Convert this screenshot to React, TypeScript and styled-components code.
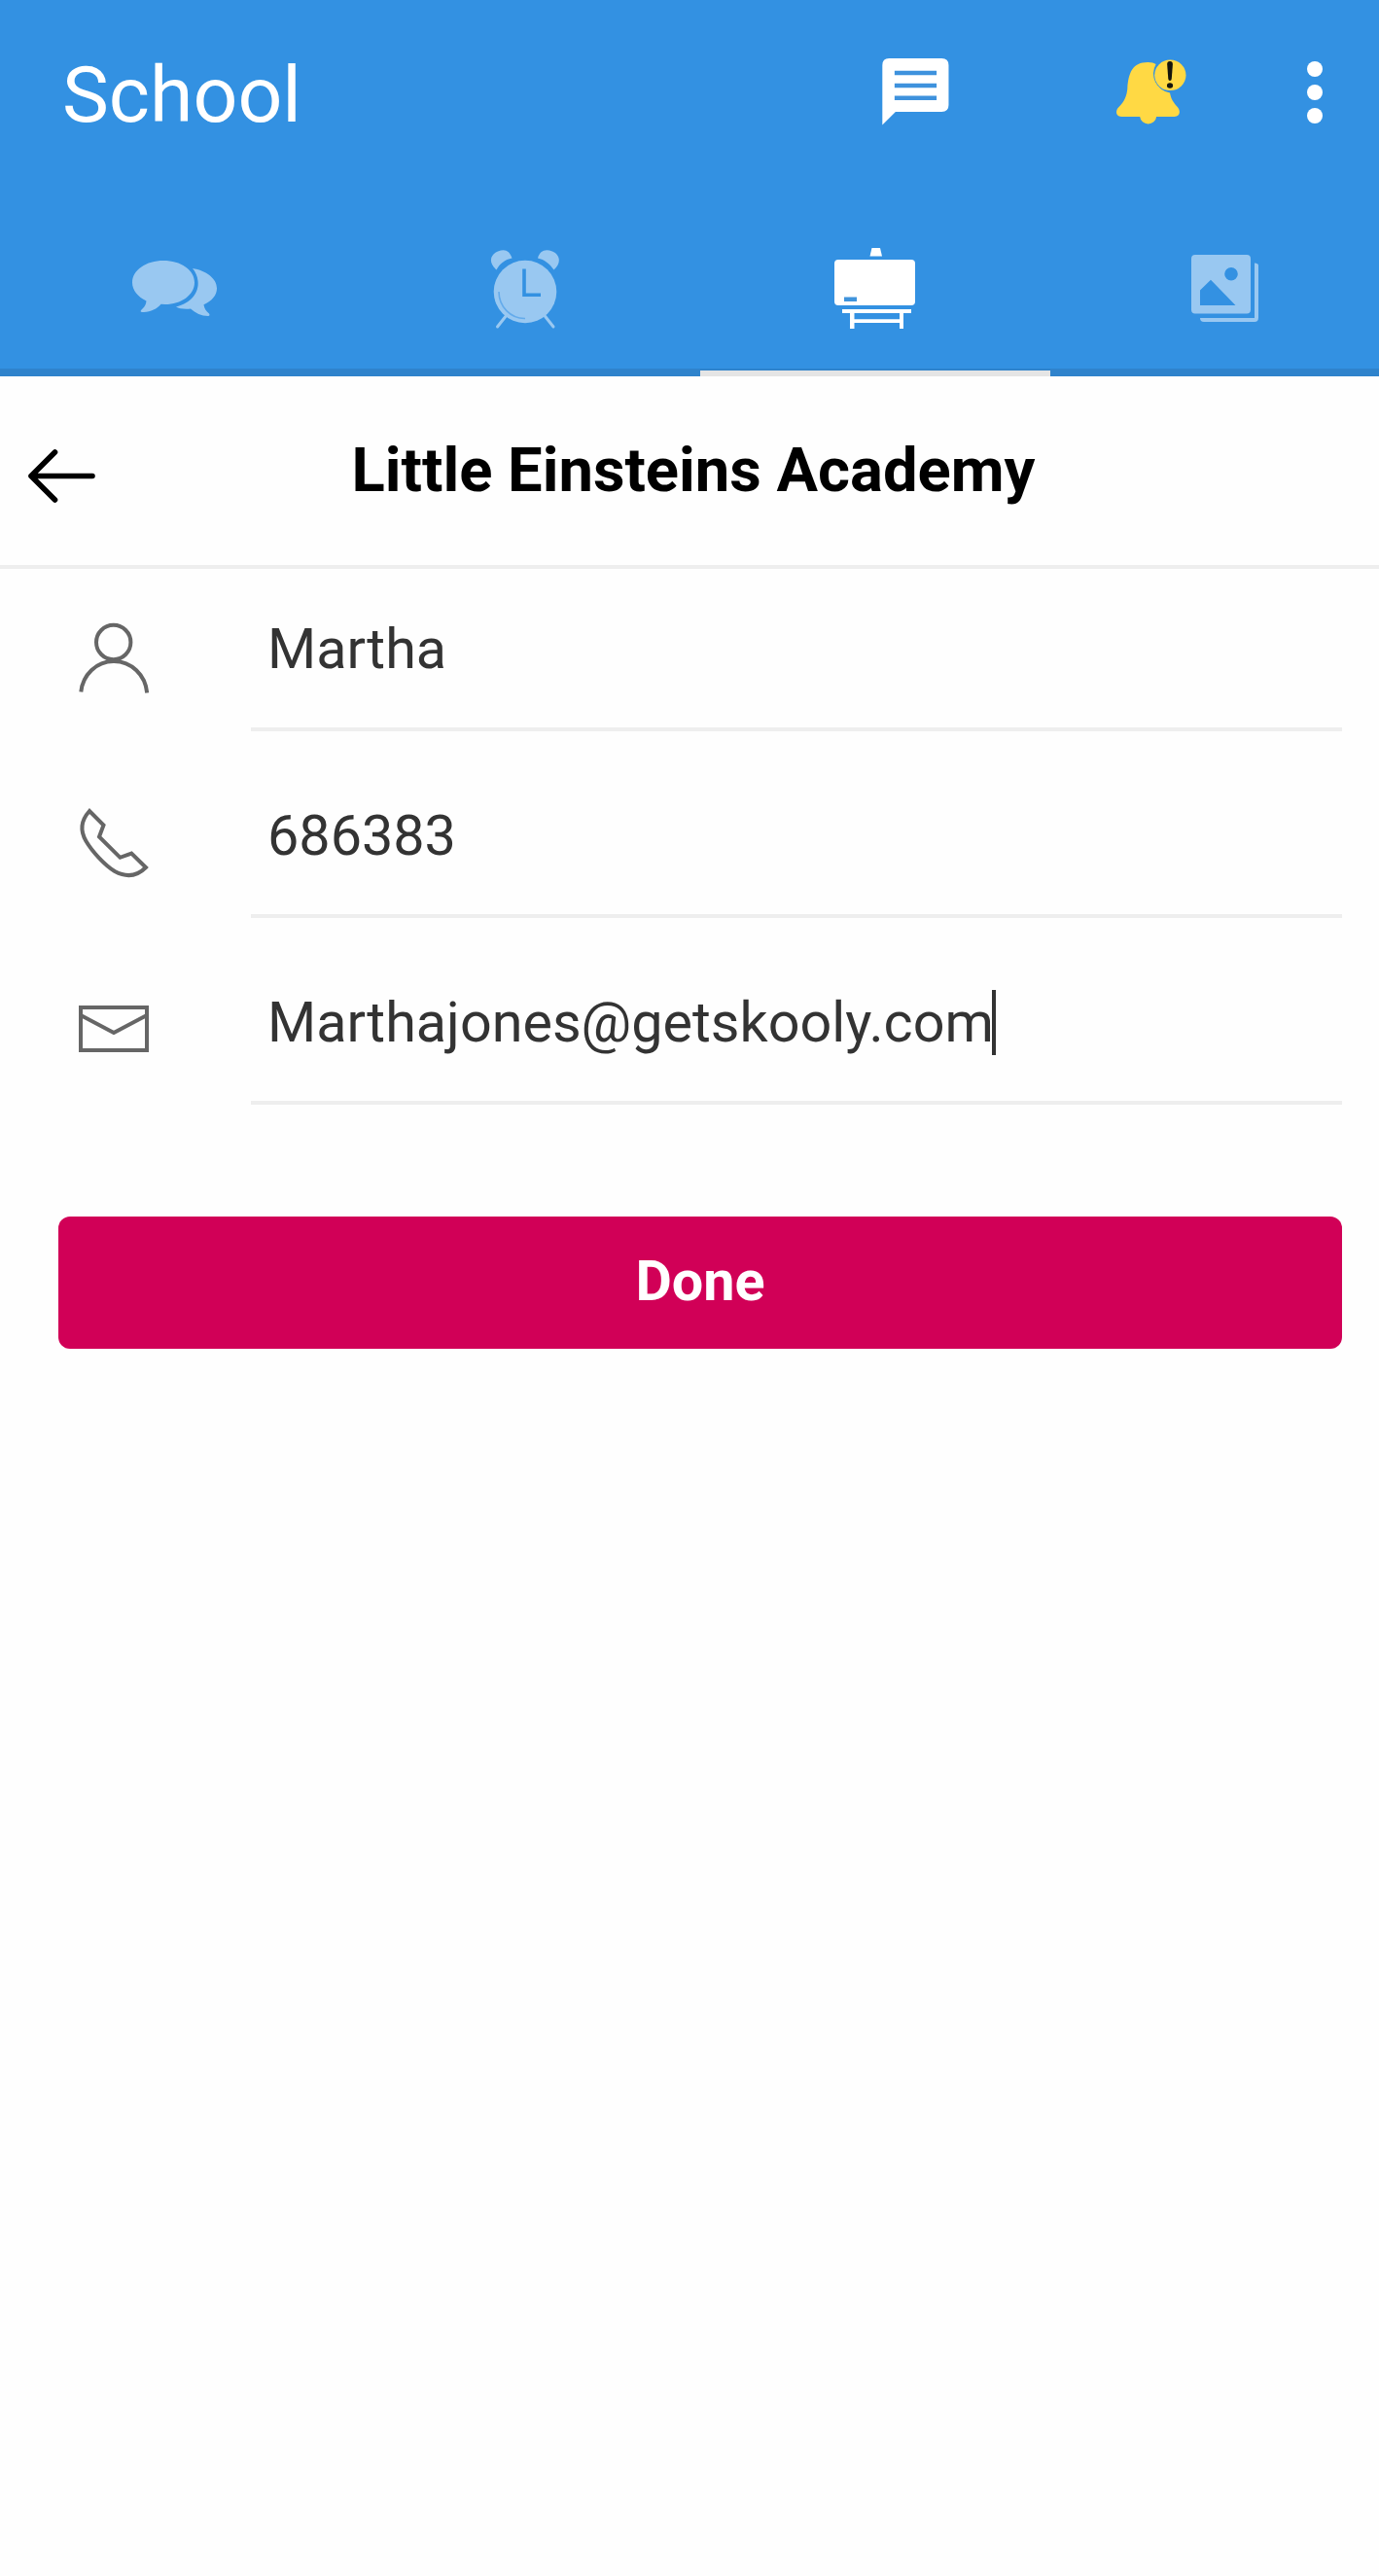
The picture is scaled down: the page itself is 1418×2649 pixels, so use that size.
import React from 'react';
import styled, { createGlobalStyle } from 'styled-components';

const Global = createGlobalStyle`
  *, *::before, *::after { box-sizing: border-box; }
  body { margin: 0; background: #fefefe; font-family: Roboto, "Liberation Sans", sans-serif; }
  svg { display: block; flex: none; }
`;

const Screen = styled.div`
  display: flex;
  flex-direction: column;
  width: 1418px;
  min-height: 2649px;
  background: #fefefe;
`;

const Header = styled.header`
  display: flex;
  flex-direction: column;
  height: 387px;
  background: #3391e2;
`;

const Toolbar = styled.div`
  display: flex;
  align-items: center;
  height: 193px;
  padding: 0 58px 0 64px;
`;

const AppTitle = styled.h1`
  flex: 1;
  margin: 0;
  padding-top: 2px;
  color: #fff;
  font-size: 80.6px;
  line-height: 96px;
  font-weight: 400;
`;

const Actions = styled.div`
  display: flex;
  align-items: flex-start;
  height: 73px;
`;

const ActionButton = styled.button<{ $gap?: number; $top?: number }>`
  margin: ${(p) => p.$top ?? 0}px 0 0 ${(p) => p.$gap ?? 0}px;
  padding: 0;
  border: 0;
  background: none;
`;

const Tabs = styled.nav`
  display: grid;
  grid-template-columns: repeat(4, 1fr);
  width: 1440px;
  height: 194px;
`;

const TabClip = styled.div`
  overflow: hidden;
`;

const Tab = styled.button<{ $active?: boolean; $top: number }>`
  display: flex;
  justify-content: center;
  align-items: flex-start;
  padding: ${(p) => p.$top}px 0 0;
  border: 0;
  background: linear-gradient(#2f83cc, #2f83cc) bottom / 100% 8px no-repeat;
  ${(p) =>
    p.$active &&
    `background: linear-gradient(#e5e5e5, #e5e5e5) bottom / 100% 6px no-repeat,
      linear-gradient(#2f83cc, #2f83cc) bottom / 100% 8px no-repeat;`}
`;

const TitleBar = styled.div`
  display: grid;
  grid-template-columns: 98px 1fr 98px;
  height: 198px;
  border-bottom: 4px solid #eee;
`;

const BackButton = styled.button`
  display: flex;
  align-items: flex-start;
  padding: 74px 0 0 28px;
  border: 0;
  background: none;
`;

const SchoolName = styled.h2`
  margin: 0;
  padding: 59px 0 0 8px;
  color: #000;
  font-size: 63.3px;
  line-height: 75px;
  font-weight: 700;
  text-align: center;
  white-space: nowrap;
`;

const Form = styled.form`
  display: flex;
  flex-direction: column;
  padding: 0 38px 0 60px;
`;

const Row = styled.label<{ $first?: boolean }>`
  display: grid;
  grid-template-columns: 198px 1fr;
  height: ${(p) => (p.$first ? 167 : 192)}px;
`;

const RowIcon = styled.span`
  display: flex;
  align-items: flex-end;
  padding: 0 0 33px 16px;
`;

const Value = styled.span`
  display: flex;
  align-items: flex-end;
  padding: 0 0 47px 17px;
  border-bottom: 4px solid #eee;
  color: #333;
  font-size: 57.5px;
  line-height: 67px;
`;

const Caret = styled.i`
  width: 4px;
  height: 67px;
  margin-left: -2px;
  background: #333;
`;

const DoneButton = styled.button`
  height: 136px;
  margin-top: 115px;
  padding: 0 0 3px;
  border: 0;
  border-radius: 12px;
  background: #d10057;
  color: #fff;
  font: 700 57.5px/67px Roboto, "Liberation Sans", sans-serif;
`;

const MessageIcon = () => (
  <svg width="70" height="70" viewBox="0 0 68 70" preserveAspectRatio="none">
    <path d="M7 0H59.500Q66.500 0 66.500 7V48Q66.500 55 59.500 55H13.500L.3 68.500V7Q.3 0 7 0Z" fill="#fff" />
    <path d="M12.500 15H54.500M12.500 28H54.500M12.500 40.700H54.500" stroke="#3e92dd" strokeWidth="4.600" />
  </svg>
);

const BellIcon = () => (
  <svg width="72" height="69" viewBox="0 0 70 69" preserveAspectRatio="none">
    <path
      d="M39.500 5A20 20 0 0 0 53.500 34.500C54.500 41 57.500 45 61 49C64.500 53 63.500 59 58 59H40A8.300 8.300 0 0 1 23.500 59H5C-1 59-1 52.500 2 49.500C8 44 10.500 37 11 30C12 14 16 3 31.500 3C35 3 37.500 3.800 39.500 5Z"
      fill="#ffd944"
    />
    <circle cx="53.800" cy="16.300" r="15.700" fill="#ffd944" />
    <path d="M50.700 5Q50.700 2 53.500 2T56.300 5L55.200 20Q55 22 53.500 22T51.800 20Z" fill="#15150c" />
    <ellipse cx="53.500" cy="27" rx="3" ry="2.800" fill="#15150c" />
  </svg>
);

const MoreIcon = () => (
  <svg width="16" height="65" viewBox="0 0 16 65" fill="#fff">
    <circle cx="8" cy="8" r="8" />
    <circle cx="8" cy="32" r="8" />
    <circle cx="8" cy="56" r="8" />
  </svg>
);

const ChatIcon = () => (
  <svg width="88" height="90" viewBox="0 0 88 90" fill="#99c8f1">
    <path d="M32 20C50 20 64 29.500 64 42.500S50 65 34 65L29.500 64.700C25 70 17 74 9 72.700C8 72 9 71 10.500 69.500C13 67 14 65 14.500 61.500C6 57.500 0 50.500 0 42.500C0 29.500 14.500 20 32 20Z" />
    <path d="M62 28C76 30 87 38.500 87 48.500C87 55.500 82 61.500 73.500 65.300C74 69.500 76 72 79 74.500C80 76 79.500 77 78 77C71 77 65 74 60 69.500C54 70 48 69.500 45 67.500C60 64 69 53 67.500 41C67 36 65 31.500 62 28Z" />
  </svg>
);

const AlarmIcon = () => (
  <svg width="72" height="82" viewBox="0 0 72 82" fill="#99c8f1">
    <path d="M6.500 20.500C-3 12 1 4.500 8 1.500C15-1.500 20 .5 22.500 8.500C15 10 10 14 6.500 20.500Z" />
    <path d="M65.500 20.500C74 13 71.500 4.500 64 1.500C57-1.500 51 .5 49 8.500C56 10 61 14 65.500 20.500Z" />
    <path d="M17 67L7.500 79M55.500 67L65 79" stroke="#99c8f1" strokeWidth="3" strokeLinecap="round" />
    <circle cx="36" cy="43" r="32.300" />
    <path d="M35 19.500V46.300H52" fill="none" stroke="#3391e2" strokeWidth="3.600" />
    <path d="M9 43A26.500 27.500 0 0 0 36 70.500" fill="none" stroke="#64abeb" strokeWidth="1.600" />
  </svg>
);

const BoardIcon = () => (
  <svg width="84" height="84" viewBox="0 0 84 84" fill="#fff">
    <path d="M38.500 0H47L49 8.500H36.500Z" />
    <rect x="0" y="12" width="83" height="47" rx="4" />
    <rect x="10" y="50.500" width="13" height="4.500" fill="#4094dc" />
    <path d="M8 63H79V67H8ZM16 67H20.500V83H16ZM67 67H71V83H67ZM20 73.200H67V77H20Z" />
  </svg>
);

const GalleryIcon = () => (
  <svg width="70" height="90" viewBox="0 0 70 90">
    <path
      fillRule="evenodd"
      fill="#99c8f1"
      d="M4 7H57Q61 7 61 11V63.500Q61 67.500 57 67.500H4Q0 67.500 0 63.500V11Q0 7 4 7ZM9 59H45.500L20 32.800L9 43.500ZM41 20A6.800 6.800 0 1 0 41 33.600A6.800 6.800 0 1 0 41 20Z"
    />
    <path d="M65 15.500Q69 15.500 69 18V71.500Q69 76 65 76H13Q9 76 9 72H65Z" fill="#99c8f1" />
  </svg>
);

const BackIcon = () => (
  <svg width="71" height="58" viewBox="0 0 71 58">
    <path d="M67 28.500H4M28.500 4L4 28.500L28.500 53" fill="none" stroke="#000" strokeWidth="5.600" strokeLinecap="round" strokeLinejoin="round" />
  </svg>
);

const UserIcon = () => (
  <svg width="80" height="80" viewBox="0 0 80 80" fill="none" stroke="#666" strokeWidth="4">
    <circle cx="40.700" cy="21.500" r="17.700" />
    <path d="M7.300 72.500C9 55 23 41 41 41S73.500 55 75.200 73.500" />
  </svg>
);

const PhoneIcon = () => (
  <svg width="80" height="80" viewBox="0 3 80 80" fill="none" stroke="#666" strokeWidth="4">
    <path d="M16 6L30.500 20.500L26 32.500L47.500 53.800L59.200 49.500L74 64C64 74 53 74 42 68C32 62 19 48 12.500 37C6 26 7 16 16 6Z" />
  </svg>
);

const MailIcon = () => (
  <svg width="80" height="80" viewBox="0 5 80 80" fill="none" stroke="#666" strokeWidth="4">
    <path d="M7 18H75V62H7ZM7 26L41 44L75 26" />
  </svg>
);

const fields = [
  { id: 'name', value: 'Martha', Icon: UserIcon },
  { id: 'phone', value: '686383', Icon: PhoneIcon },
  { id: 'email', value: 'Marthajones@getskooly.com', Icon: MailIcon, focused: true },
];

const tabs = [
  { id: 'chat', Icon: ChatIcon, top: 55 },
  { id: 'reminders', Icon: AlarmIcon, top: 64 },
  { id: 'school', Icon: BoardIcon, top: 62, active: true },
  { id: 'gallery', Icon: GalleryIcon, top: 62 },
];

export default function App() {
  return (
    <Screen>
      <Global />
      <Header>
        <Toolbar>
          <AppTitle>School</AppTitle>
          <Actions>
            <ActionButton><MessageIcon /></ActionButton>
            <ActionButton $gap={171} $top={1}><BellIcon /></ActionButton>
            <ActionButton $gap={124} $top={3}><MoreIcon /></ActionButton>
          </Actions>
        </Toolbar>
        <TabClip>
          <Tabs>
            {tabs.map(({ id, Icon, top, active }) => (
              <Tab key={id} $top={top} $active={active}><Icon /></Tab>
            ))}
          </Tabs>
        </TabClip>
      </Header>
      <TitleBar>
        <BackButton><BackIcon /></BackButton>
        <SchoolName>Little Einsteins Academy</SchoolName>
      </TitleBar>
      <Form>
        {fields.map(({ id, value, Icon, focused }, i) => (
          <Row key={id} $first={i === 0}>
            <RowIcon><Icon /></RowIcon>
            <Value>{value}{focused && <Caret />}</Value>
          </Row>
        ))}
        <DoneButton type="button">Done</DoneButton>
      </Form>
    </Screen>
  );
}
